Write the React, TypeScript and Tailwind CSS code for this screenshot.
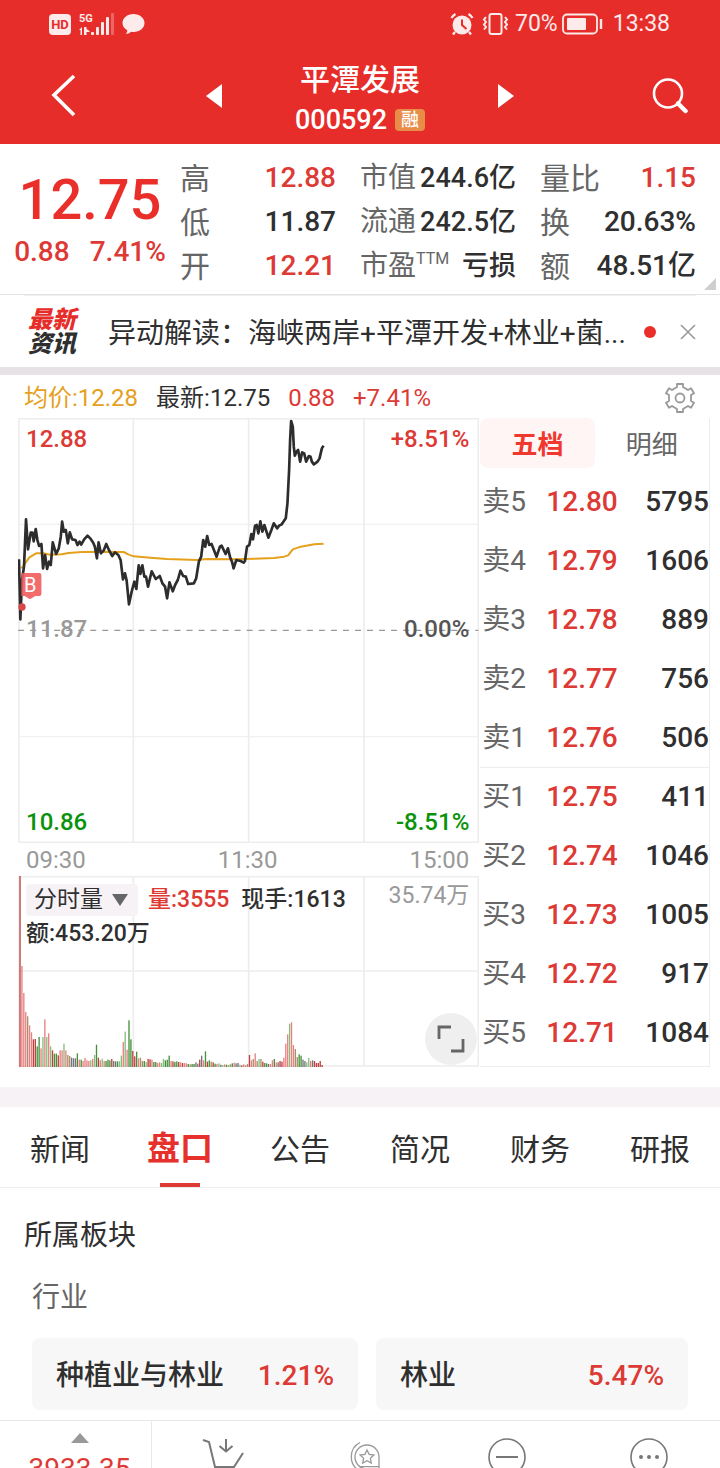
import clsx from 'clsx';

const QUOTES = [
  [
    { label: '高', value: '12.88', up: true },
    { label: '低', value: '11.87', up: false },
    { label: '开', value: '12.21', up: true },
  ],
  [
    { label: '市值', value: '244.6亿', up: false },
    { label: '流通', value: '242.5亿', up: false },
    { label: '市盈', sup: 'TTM', value: '亏损', up: false },
  ],
  [
    { label: '量比', value: '1.15', up: true },
    { label: '换', value: '20.63%', up: false },
    { label: '额', value: '48.51亿', up: false },
  ],
];

const ORDERS = [
  { side: '卖5', price: '12.80', volume: 5795 },
  { side: '卖4', price: '12.79', volume: 1606 },
  { side: '卖3', price: '12.78', volume: 889 },
  { side: '卖2', price: '12.77', volume: 756 },
  { side: '卖1', price: '12.76', volume: 506 },
  { side: '买1', price: '12.75', volume: 411 },
  { side: '买2', price: '12.74', volume: 1046 },
  { side: '买3', price: '12.73', volume: 1005 },
  { side: '买4', price: '12.72', volume: 917 },
  { side: '买5', price: '12.71', volume: 1084 },
];

const TABS = ['新闻', '盘口', '公告', '简况', '财务', '研报'];

const PRICE_POINTS =
  '57,538 61,718 66,600 72,560 78,418 84,508 92,458 97,458 101,484 107,447 112,480 117,498 124,492 129,565 135,525 141,567 147,545 152,555 158,487 168,522 176,505 182,470 186,425 191,455 197,450 203,490 209,457 216,478 226,480 232,495 238,485 243,494 252,478 262,467 270,475 279,488 284,500 290,535 295,487 302,520 310,512 318,492 326,510 336,528 344,517 354,525 361,540 368,598 374,580 379,602 386,673 394,635 402,605 408,627 415,556 420,582 426,556 432,590 437,590 443,620 448,598 454,574 466,597 478,588 486,610 494,620 500,655 507,607 517,634 524,615 532,600 540,572 548,588 556,590 563,612 580,610 587,595 595,545 602,530 608,480 614,500 620,468 626,495 633,492 648,530 658,500 663,497 675,522 682,505 688,530 694,545 699,565 707,540 720,543 729,548 733,543 739,500 746,495 752,462 757,478 763,437 768,435 773,460 779,424 785,455 791,435 803,473 812,450 819,430 829,445 835,437 843,433 855,415 860,370 865,270 868,180 871,123 876,140 879,200 882,227 887,215 892,210 898,245 904,217 910,220 916,245 924,228 929,230 933,245 939,253 950,245 956,235 963,205 968,197';

const AVERAGE_POINTS =
  '64,565 72,555 88,532 108,520 130,520 150,524 185,523 205,519 245,516 300,515 370,516 385,524 400,529 450,533 500,537 590,540 620,537 700,538 760,536 820,534 850,530 862,526 876,508 900,500 940,493 968,491';

const VOLUMES = [
  575, 303, 222, 165, 152, 125, 104, 83, 84, 62, 90, 56, 90, 143, 90, 101, 62, 50, 40, 40, 35, 50, 50, 70, 50, 36, 33,
  28, 26, 26, 41, 22, 22, 18, 27, 20, 18, 20, 24, 36, 67, 28, 20, 25, 18, 18, 22, 20, 24, 18, 17, 17, 17, 34, 75, 106,
  52, 140, 83, 48, 32, 46, 26, 28, 18, 18, 15, 24, 23, 22, 15, 15, 12, 14, 12, 24, 20, 22, 34, 18, 17, 15, 17, 15, 14,
  12, 12, 11, 9, 8, 9, 9, 14, 10, 22, 34, 20, 47, 16, 20, 16, 14, 10, 9, 11, 7, 6, 8, 7, 6, 8, 11, 13, 11, 12, 7, 5, 8,
  6, 9, 36, 20, 24, 41, 18, 24, 24, 16, 12, 11, 9, 9, 20, 24, 14, 14, 18, 16, 28, 70, 98, 130, 134, 66, 54, 30, 38, 34,
  22, 18, 14, 27, 18, 20, 18, 12, 12, 18, 6,
];

// one letter per bar: R/r up, G/g down, o mixed, k flat
const VOLUME_KINDS =
  'RrrrorrRRGGrgrgrgRGGRrrgrookkkGrGrrrrgrgGRrgrGGGRkkGggrgrGGRRGrooGgRRrGGrrggGGGrRGGRrRrrGoGGkkRkrGRGoRGrgkgrGgoGrkkgRrroRrorogoRGGkrrGrkRRrrrgrrooGGkkggrkRR';

const VOLUME_COLORS: Record<string, string> = {
  R: '#bf3f3f',
  r: '#e88080',
  G: '#45913a',
  g: '#85bf7c',
  o: '#a98f68',
  k: '#77737c',
};

function StatusBar() {
  return (
    <div className="flex h-12 items-center justify-between pl-[49px] pr-[50px] text-white/90">
      <div className="flex items-center gap-2">
        <span className="flex h-[21px] w-[22px] items-center justify-center rounded bg-white/90 text-[13px] font-bold leading-none text-[#e62d2a]">
          HD
        </span>
        <svg width="35" height="24" viewBox="0 0 35 24" fill="currentColor">
          <text x="0" y="10" fontSize="11" fontWeight="700">5G</text>
          <path d="M3 15v8H1.500v-5H0zM5 15h1.500v8H5zM7.500 17l3 2v1h-3v3H6v-8h1.500z" />
          <rect x="12" y="20" width="3" height="3" rx="1" />
          <rect x="17" y="15" width="3" height="8" rx="1" />
          <rect x="22" y="10" width="3" height="13" rx="1" />
          <rect x="27" y="5" width="3" height="18" rx="1" />
          <rect x="32" y="1" width="3" height="22" rx="1" opacity="0.3" />
        </svg>
        <svg width="23" height="22" viewBox="0 0 23 22" fill="currentColor">
          <path d="M11.500 1C17.800 1 22.500 5 22.500 10s-4.700 9-11 9c-.8 0-1.600-.1-2.400-.2C7.500 20.500 5.500 21 3.800 21c1-1 1.500-2.200 1.400-3.800C2.400 15.700.5 13 .5 10 .5 5 5.200 1 11.500 1z" />
        </svg>
      </div>
      <div className="flex items-center text-[23px]">
        <svg className="mr-2" width="24" height="24" viewBox="0 0 24 24" fill="none" stroke="currentColor">
          <circle cx="12" cy="13" r="9.500" fill="currentColor" stroke="none" />
          <path d="M1.500 6a11 11 0 0 1 4-4M22.500 6a11 11 0 0 0-4-4M5 20l-2 2.500M19 20l2 2.500" strokeWidth="2.400" />
          <path d="M12 7.500V13l4.500 4" stroke="#e62d2a" strokeWidth="2" />
        </svg>
        <svg className="mr-1.5" width="27" height="24" viewBox="0 0 27 24" fill="none" stroke="currentColor" strokeWidth="2">
          <rect x="7.500" y="2" width="12" height="20" rx="2" />
          <path
            d="M4 5L2 7.500 4 10 2 12.500 4 15 2 17.500M23 5l2 2.500-2 2.500 2 2.500-2 2.500 2 2.500"
            strokeWidth="2"
          />
        </svg>
        70%
        <svg className="ml-1 mr-2.5" width="41" height="24" viewBox="0 0 41 24" fill="none" stroke="currentColor">
          <rect x="1" y="2.500" width="34" height="19" rx="4" strokeWidth="1.800" />
          <rect x="5" y="6" width="19" height="12" rx="1" fill="currentColor" stroke="none" />
          <path d="M39 7v10" strokeWidth="2.400" />
        </svg>
        13:38
      </div>
    </div>
  );
}

function Header() {
  return (
    <header className="bg-[#e62d2a] text-white">
      <StatusBar />
      <nav className="grid h-24 grid-cols-[1fr_auto_1fr] items-center">
        <button type="button" aria-label="返回" className="justify-self-start pl-[51px]">
          <svg width="25" height="44" viewBox="0 0 25 44" fill="none" stroke="currentColor" strokeWidth="3.600">
            <path d="M23 2L3 21l20 20" />
          </svg>
        </button>
        <div className="flex items-center gap-[73px]">
          <button type="button" aria-label="上一只">
            <svg width="16" height="24" viewBox="0 0 16 24" fill="currentColor">
              <path d="M16 0v24L0 12z" />
            </svg>
          </button>
          <div className="flex flex-col items-center gap-1 pt-2">
            <h1 className="text-[30px] font-medium leading-9">平潭发展</h1>
            <div className="flex items-center gap-2 text-[27px] font-medium leading-9">
              000592
              <span className="flex h-[22px] w-[30px] items-center justify-center rounded-sm bg-[#e88d47] text-lg leading-none">
                融
              </span>
            </div>
          </div>
          <button type="button" aria-label="下一只">
            <svg width="16" height="24" viewBox="0 0 16 24" fill="currentColor">
              <path d="M0 0v24l16-12z" />
            </svg>
          </button>
        </div>
        <button type="button" aria-label="搜索" className="justify-self-end pr-8">
          <svg width="36" height="36" viewBox="0 0 36 36" fill="none" stroke="currentColor">
            <circle cx="16" cy="15.500" r="14" strokeWidth="2.600" />
            <path d="M26 25.500l7.500 7.500" strokeWidth="4.500" strokeLinecap="round" />
          </svg>
        </button>
      </nav>
    </header>
  );
}

function Quote() {
  return (
    <section className="relative flex h-[151px] border-b border-[#e4e4e4] pr-6 pt-3">
      <div className="flex w-[180px] flex-col items-center gap-1 pt-3 font-medium text-[#ea2f2a]">
        <div className="text-[56px] leading-[64px]">12.75</div>
        <div className="flex gap-5 text-[28px] leading-8 text-[#dd3935]">
          <span>0.88</span>
          <span>7.41%</span>
        </div>
      </div>
      <div className="grid flex-1 grid-cols-3 gap-6">
        {QUOTES.map((column, i) => (
          <dl key={i} className={i === 1 ? 'text-[27px]' : 'text-[28px]'}>
            {column.map((item) => (
              <div key={item.label} className="flex h-11 items-center justify-between whitespace-nowrap">
                <dt className={clsx('flex text-[#666]', i === 1 ? 'text-[28px]' : 'text-[30px]')}>
                  {item.label}
                  {item.sup && <sup className="top-0 pt-1.5 text-base leading-none">{item.sup}</sup>}
                </dt>
                <dd className={clsx('font-medium', item.up ? 'text-[#dd3935]' : 'text-[#2f2f2f]')}>{item.value}</dd>
              </div>
            ))}
          </dl>
        ))}
      </div>
      <svg className="absolute bottom-1 right-1" width="12" height="12" viewBox="0 0 12 12" fill="#cfcfcf">
        <path d="M12 0v12H0z" />
      </svg>
    </section>
  );
}

function NewsBar() {
  return (
    <section className="mx-6 flex h-[72px] items-center border-t border-[#f0f0f0]">
      <div className="mr-7 w-14 pl-1 text-2xl font-black italic leading-6 text-[#2f2f2f]">
        <span className="text-[#e62d2a]">最新</span>
        <br />
        资讯
      </div>
      <a href="#news" className="min-w-0 flex-1 overflow-hidden whitespace-nowrap pt-1 text-[28px] text-[#2f2f2f]">
        异动解读：海峡两岸+平潭开发+林业+菌...
      </a>
      <span className="ml-2 size-3 rounded-full bg-[#ea2f2a]" />
      <button type="button" aria-label="关闭" className="ml-6">
        <svg width="16" height="16" viewBox="0 0 16 16" stroke="#999" strokeWidth="1.600">
          <path d="M1 1l14 14M15 1L1 15" />
        </svg>
      </button>
    </section>
  );
}

function PriceChart() {
  return (
    <div className="relative h-[425px]">
      <svg className="absolute inset-0 size-full" viewBox="0 0 1380 1275" preserveAspectRatio="none" fill="none">
        <g stroke="#ededed" strokeWidth="5">
          <path d="M3 2H1377V1273H3zM345 2V1273M690 2V1273M1035 2V1273" />
          <path d="M3 319H1377M3 956H1377" strokeWidth="3" />
        </g>
        <path d="M0 637H1377" stroke="#999" strokeWidth="4" strokeDasharray="18 18" />
        <g transform="translate(-54 -114)" strokeLinejoin="round">
          <polyline points={AVERAGE_POINTS} stroke="#e5a01c" strokeWidth="6" />
          <polyline points={PRICE_POINTS} stroke="#2d2d2d" strokeWidth="8" />
          <circle cx="66" cy="681" r="11" fill="#d94848" />
          <path d="M70 579h48q6 0 6 6v56q0 7-6 7h-12l-16 10-16-10h-10v-69z" fill="#f05d5d" fillOpacity="0.9" />
        </g>
      </svg>
      <span className="absolute left-1.5 top-[155px] text-xl leading-6 text-white">B</span>
      <div className="relative flex h-full flex-col justify-between py-2 pl-2 pr-2.5 text-2xl font-medium leading-[26px]">
        <div className="flex justify-between text-[#dd3935]">
          <span>12.88</span>
          <span>+8.51%</span>
        </div>
        <div className="flex justify-between pb-1 text-[#555]">
          <span className="text-[#999]">11.87</span>
          <span>0.00%</span>
        </div>
        <div className="flex justify-between text-[#0a930a]">
          <span>10.86</span>
          <span>-8.51%</span>
        </div>
      </div>
    </div>
  );
}

function VolumeChart() {
  return (
    <div className="relative h-[191px]">
      <svg className="absolute inset-0 size-full" viewBox="0 0 1380 573" preserveAspectRatio="none" fill="none">
        <path
          d="M3 2H1377V570H3zM345 2V570M690 2V570M1035 2V570M3 285H1377"
          stroke="#ededed"
          strokeWidth="5"
        />
        {VOLUMES.map((v, i) => (
          <rect
            key={i}
            x={4 + i * 5.72}
            y={573 - v}
            width="4"
            height={v}
            fill={VOLUME_COLORS[VOLUME_KINDS[i]] ?? VOLUME_COLORS.R}
          />
        ))}
      </svg>
      <div className="relative pl-2 pr-2.5 pt-2 text-[23px] leading-8 text-[#2f2f2f]">
        <div className="flex items-start whitespace-nowrap">
          <div className="relative mr-2.5 w-28 shrink-0">
            <select
              aria-label="指标"
              className="block h-8 w-full appearance-none rounded bg-[#f6f2f6] pl-2 leading-8 outline-none"
            >
              <option>分时量</option>
            </select>
            <svg className="pointer-events-none absolute right-2.5 top-2.5" width="16" height="12" viewBox="0 0 16 12" fill="#666">
              <path d="M0 0h16L8 12z" />
            </svg>
          </div>
          <span className="mr-3 font-medium text-[#dd3935]">量:3555</span>
          <span className="font-medium">现手:1613</span>
          <span className="ml-auto leading-6 text-[#999]">35.74万</span>
        </div>
        <div className="font-medium leading-9">额:453.20万</div>
      </div>
      <button
        type="button"
        aria-label="全屏"
        className="absolute bottom-0.5 right-0.5 flex size-[52px] items-center justify-center rounded-full bg-[#efefef]"
      >
        <svg width="28" height="28" viewBox="0 0 28 28" fill="none" stroke="#666" strokeWidth="2.800">
          <path d="M2 14V2h12M26 14v12H14" />
        </svg>
      </button>
    </div>
  );
}

function OrderBook() {
  return (
    <div className="ml-px flex flex-col border-b border-r border-[#ededed]">
      <div className="mb-1 flex h-[50px] text-[26px]">
        <button type="button" className="flex-1 rounded-lg bg-[#fff5f5] pt-1 font-bold text-[#f0382f]">
          五档
        </button>
        <button type="button" className="flex-1 pt-1 text-[#666]">
          明细
        </button>
      </div>
      <table className="w-full border-separate border-spacing-0 text-[28px] leading-9">
        <tbody>
          {ORDERS.map((o, i) => (
            <tr key={o.side}>
              <td className={clsx('h-[59px] w-[66px] pl-0.5 text-[#666]', i === 5 && 'border-t border-[#ededed]')}>
                {o.side}
              </td>
              <td className={clsx('font-medium text-[#dd3935]', i === 5 && 'border-t border-[#ededed]')}>{o.price}</td>
              <td className={clsx('text-right font-medium text-[#2f2f2f]', i === 5 && 'border-t border-[#ededed]')}>
                {o.volume}
              </td>
            </tr>
          ))}
        </tbody>
      </table>
    </div>
  );
}

function Market() {
  return (
    <section className="pb-5 pl-[18px] pr-2.5">
      <div className="flex h-[43px] items-center gap-[18px] pl-1.5 pr-[15px] pt-0.5 text-2xl text-[#dd3935]">
        <span className="text-[#e5a01c]">均价:12.28</span>
        <span className="text-[#2f2f2f]">最新:12.75</span>
        <span>0.88</span>
        <span>+7.41%</span>
        <button type="button" aria-label="设置" className="ml-auto">
          <svg width="30" height="30" viewBox="-15 -15 30 30" fill="none" stroke="#999" strokeWidth="1.800" strokeLinejoin="round">
            <path d="M-3-14H3V-11L8-8 11-9.800 14-4.700 11-3V3L14 4.700 11 9.800 8 8 3 11V14H-3V11L-8 8-11 9.800-14 4.700-11 3V-3L-14-4.700-11-9.800-8-8-3-11z" />
            <circle r="4.500" />
          </svg>
        </button>
      </div>
      <div className="grid grid-cols-[2fr_1fr]">
        <div>
          <PriceChart />
          <div className="flex h-[33px] items-center justify-between pl-2 pr-2.5 text-2xl text-[#999]">
            <span>09:30</span>
            <span>11:30</span>
            <span>15:00</span>
          </div>
          <VolumeChart />
        </div>
        <OrderBook />
      </div>
    </section>
  );
}

function Tabs() {
  return (
    <nav className="grid h-[81px] grid-cols-6 border-b border-[#ececec]">
      {TABS.map((tab) => {
        const active = tab === '盘口';
        return (
          <a
            key={tab}
            href={`#${tab}`}
            className={clsx(
              'relative flex items-center justify-center pt-1',
              active ? 'text-[33px] font-bold text-[#e5302c]' : 'text-[30px] text-[#2f2f2f]',
            )}
          >
            {tab}
            {active && <span className="absolute bottom-0 h-1 w-10 bg-[#dd3935]" />}
          </a>
        );
      })}
    </nav>
  );
}

function Sectors() {
  return (
    <section className="pb-2.5 pt-7 text-[28px] text-[#2f2f2f]">
      <h2 className="pl-6 leading-10">所属板块</h2>
      <h3 className="pl-8 pt-[22px] leading-10 text-[#666]">行业</h3>
      <div className="grid grid-cols-[326fr_312fr] gap-[18px] px-8 pt-5 font-medium">
        <a href="#planting" className="flex h-[72px] items-center justify-between rounded-lg bg-[#f7f7f7] px-6 pt-1">
          种植业与林业<span className="text-[#dd3935]">1.21%</span>
        </a>
        <a href="#forestry" className="flex h-[72px] items-center justify-between rounded-lg bg-[#f7f7f7] px-6 pt-1">
          林业<span className="text-[#dd3935]">5.47%</span>
        </a>
      </div>
    </section>
  );
}

function BottomBar() {
  return (
    <footer className="flex h-12 overflow-hidden border-t border-[#e8e8e8] text-[#777]">
      <div className="flex w-[152px] flex-col items-center border-r border-[#e8e8e8] pl-2">
        <svg className="mt-3 shrink-0" width="18" height="10" viewBox="0 0 18 10" fill="#999">
          <path d="M9 0l9 10H0z" />
        </svg>
        <span className="pt-2 text-[28px] leading-9 text-[#dd3935]">3933.35</span>
      </div>
      <div className="grid flex-1 grid-cols-4 justify-items-center pt-4">
        <button type="button" aria-label="买入" className="self-start">
          <svg width="42" height="38" viewBox="0 0 42 38" fill="none" stroke="currentColor" strokeWidth="2">
            <path d="M1 3l6 2 6 25h19l9-14M24 2v12M17.500 9l6.500 5.500L30.500 9" />
          </svg>
        </button>
        <button type="button" aria-label="自选" className="self-start pt-1">
          <svg width="30" height="38" viewBox="0 0 30 38" fill="none" stroke="#999" strokeWidth="1.300">
            <path d="M10 1.500A16 16 0 0 0 10 30" />
            <path d="M29 27V16A12 12 0 1 0 17 28M10 25.700h19" />
            <path d="M17 9l2.100 4.400 4.800.6-3.500 3.300.9 4.800-4.300-2.300-4.300 2.300.9-4.800-3.500-3.300 4.800-.6z" />
          </svg>
        </button>
        <button type="button" aria-label="删自选" className="self-start">
          <svg width="38" height="38" viewBox="0 0 38 38" fill="none" stroke="currentColor" strokeWidth="1.600">
            <circle cx="19" cy="20" r="18" />
            <path d="M8 20h22" strokeWidth="2" />
          </svg>
        </button>
        <button type="button" aria-label="更多" className="self-start">
          <svg width="38" height="38" viewBox="0 0 38 38" fill="none" stroke="currentColor" strokeWidth="1.600">
            <circle cx="19" cy="20" r="18" />
            <path d="M11 20h.01M19 20h.01M27 20h.01" strokeWidth="4" strokeLinecap="round" />
          </svg>
        </button>
      </div>
    </footer>
  );
}

export default function App() {
  return (
    <div className="bg-white font-[Roboto,'Noto_Sans_CJK_SC',sans-serif]">
      <Header />
      <Quote />
      <NewsBar />
      <div className="h-2 bg-[#e7e2e6]" />
      <Market />
      <div className="h-5 bg-[#f6f2f6]" />
      <Tabs />
      <Sectors />
      <BottomBar />
    </div>
  );
}
